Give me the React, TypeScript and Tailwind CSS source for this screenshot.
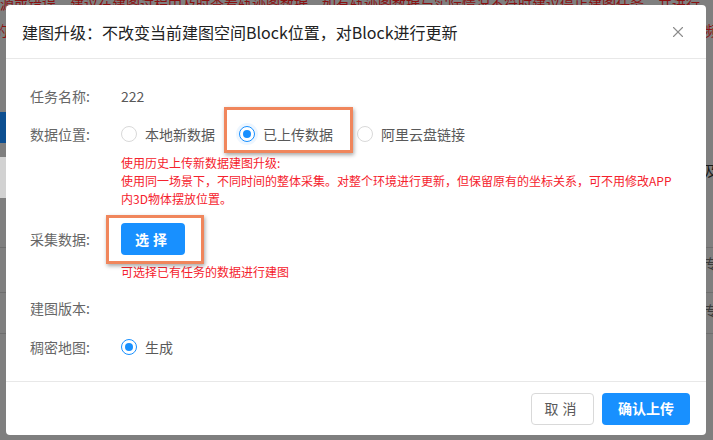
import { X } from "lucide-react";

const font = { fontFamily: '"Noto Sans CJK SC", "Noto Sans", sans-serif' };

function Radio({ checked, glow, label }: { checked?: boolean; glow?: boolean; label: string }) {
  return (
    <label className="flex items-center gap-2 text-[14px] text-[#595959]">
      <span
        className={`flex h-4 w-4 items-center justify-center rounded-full border bg-white ${
          checked ? "border-[#1890ff]" : "border-[#d9d9d9]"
        } ${glow ? "shadow-[0_0_0_3px_rgba(24,144,255,0.08)]" : ""}`}
      >
        {checked && <span className="h-2 w-2 rounded-full bg-[#1890ff]" />}
      </span>
      <span>{label}</span>
    </label>
  );
}

export default function App() {
  return (
    <div className="relative h-[440px] w-[713px] overflow-hidden bg-[#7f7f7f]" style={font}>
      {/* page behind the mask */}
      <div className="absolute left-0 top-[-7px] whitespace-nowrap text-[14px] text-[#8a1212]">
        源或错误，建议在建图过程中及时查看轨迹图数据，如有轨迹图数据与实际情况不符时建议停止建图任务，并进行
      </div>
      <div className="absolute left-[-6px] top-[20px] text-[14px] text-[#8a1212]">的</div>
      <div className="absolute right-[-6px] top-[20px] text-[14px] text-[#8a1212]">频</div>
      <div className="absolute left-0 top-[112px] h-[31px] w-[8px] bg-[#0d4f91]" />
      <div className="absolute left-0 top-[157px] h-[41px] w-[8px] bg-[#d2d2d2]" />
      <div className="absolute left-0 top-[247px] h-px w-[8px] bg-[#6e6e6e]" />
      <div className="absolute left-0 top-[292px] h-px w-[8px] bg-[#6e6e6e]" />
      <div className="absolute left-0 top-[333px] h-px w-[8px] bg-[#6e6e6e]" />
      <div className="absolute right-0 top-[247px] h-px w-[8px] bg-[#6e6e6e]" />
      <div className="absolute right-0 top-[292px] h-px w-[8px] bg-[#6e6e6e]" />
      <div className="absolute right-0 top-[333px] h-px w-[8px] bg-[#6e6e6e]" />
      <div className="absolute left-[704px] top-[160px] text-[14px] text-[#1a1a1a]">及</div>
      <div className="absolute left-[704px] top-[253px] text-[14px] text-[#3a3a3a]">专</div>
      <div className="absolute left-[704px] top-[300px] text-[14px] text-[#3a3a3a]">专</div>

      {/* modal */}
      <div className="absolute left-[6px] top-[5px] flex h-[430px] w-[700px] flex-col rounded-[4px] bg-white">
        <div className="flex h-[54px] items-center justify-between border-b border-[#e8e8e8] pl-4 pr-[19px]">
          <span className="text-[16px] font-normal text-[#222]">
            建图升级：不改变当前建图空间Block位置，对Block进行更新
          </span>
          <X className="h-[18px] w-[18px] text-[#8c8c8c]" strokeWidth={1.5} />
        </div>

        <div className="relative flex flex-1 flex-col border-b border-[#e8e8e8] px-6 pt-[21px]">
          <div className="flex h-8 items-center text-[14px]">
            <span className="w-[91px] text-[#666]">任务名称:</span>
            <span className="text-[#595959]">222</span>
          </div>
          <div className="mt-[6px] flex h-8 items-center text-[14px]">
            <span className="w-[91px] text-[#666]">数据位置:</span>
            <div className="flex items-center gap-[24px]">
              <Radio label="本地新数据" />
              <Radio checked glow label="已上传数据" />
              <Radio label="阿里云盘链接" />
            </div>
          </div>
          <div className="ml-[91px] mt-1 whitespace-nowrap text-[12px] leading-[18px] text-[#f5222d]">
            使用历史上传新数据建图升级:
            <br />
            使用同一场景下，不同时间的整体采集。对整个环境进行更新，但保留原有的坐标关系，可不用修改APP
            <br />
            内3D物体摆放位置。
          </div>
          <div className="mt-[15px] flex h-8 items-center text-[14px]">
            <span className="w-[91px] text-[#666]">采集数据:</span>
            <button className="h-8 w-16 rounded-[4px] bg-[#1890ff] text-[14px] font-bold tracking-[4px] text-white">
              选择
            </button>
          </div>
          <div className="ml-[91px] mt-2 text-[12px] leading-[18px] text-[#f5222d]">
            可选择已有任务的数据进行建图
          </div>
          <div className="mt-[11px] flex h-8 items-center text-[14px]">
            <span className="w-[91px] text-[#666]">建图版本:</span>
          </div>
          <div className="mt-[7px] flex h-8 items-center text-[14px]">
            <span className="w-[91px] text-[#666]">稠密地图:</span>
            <Radio checked label="生成" />
          </div>

          {/* highlight marks */}
          <div className="pointer-events-none absolute left-[218px] top-[48px] h-[46px] w-[129px] border-[3px] border-[#f0865c] shadow-[1px_2px_4px_rgba(0,0,0,0.35)]" />
          <div className="pointer-events-none absolute left-[100px] top-[156px] h-[49px] w-[98px] border-[3px] border-[#f0865c] shadow-[1px_2px_4px_rgba(0,0,0,0.35)]" />
        </div>

        <div className="flex h-[53px] items-center justify-end gap-2 pr-4">
          <button className="h-8 w-[63px] rounded-[4px] border border-[#d9d9d9] bg-white text-[14px] tracking-[4px] text-[#595959]">
            取消
          </button>
          <button className="h-8 w-[88px] rounded-[4px] bg-[#1890ff] text-[14px] font-bold text-white">
            确认上传
          </button>
        </div>
      </div>
    </div>
  );
}
